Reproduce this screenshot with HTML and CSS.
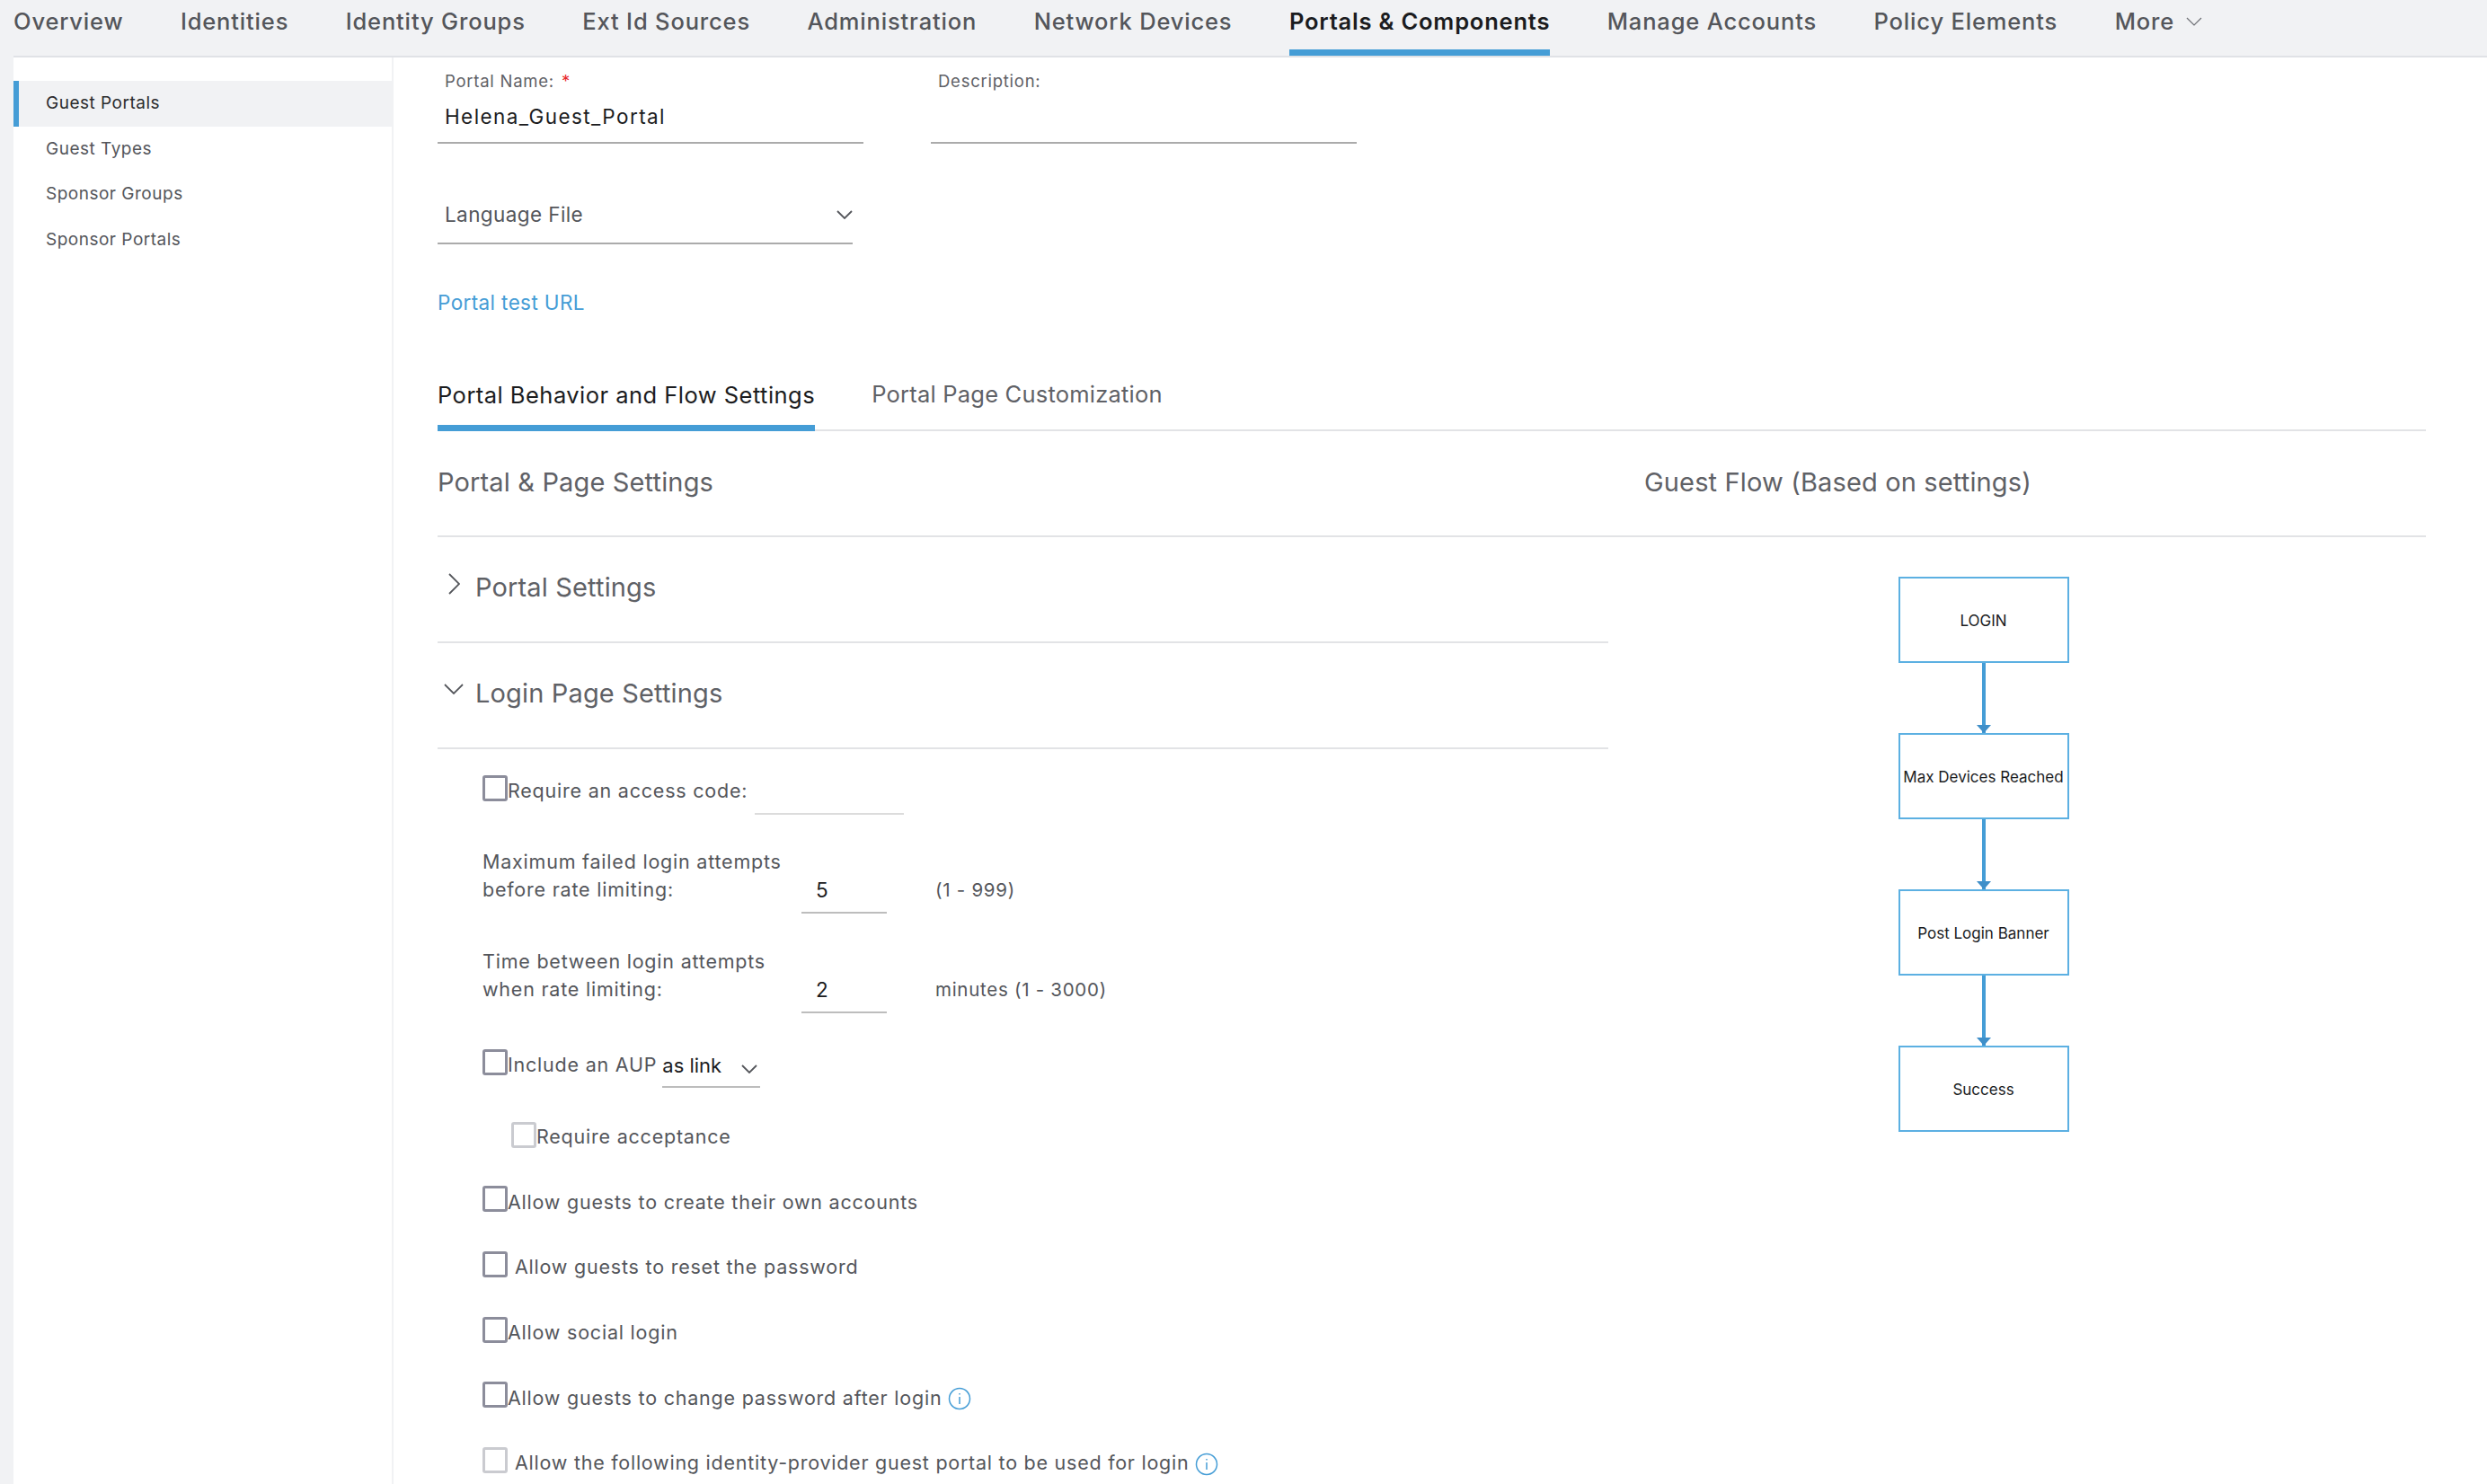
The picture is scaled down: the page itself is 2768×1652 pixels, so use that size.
FILE: index.html
```html
<!DOCTYPE html>
<html lang="en">
<head>
<meta charset="utf-8">
<title>Guest Portals</title>
<link rel="stylesheet" href="styles.css">
</head>
<body>
<div class="app">
  <nav class="topnav">
    <a class="nav-item">Overview</a>
    <a class="nav-item">Identities</a>
    <a class="nav-item">Identity Groups</a>
    <a class="nav-item">Ext Id Sources</a>
    <a class="nav-item">Administration</a>
    <a class="nav-item">Network Devices</a>
    <a class="nav-item active">Portals &amp; Components</a>
    <a class="nav-item">Manage Accounts</a>
    <a class="nav-item">Policy Elements</a>
    <a class="nav-item">More <svg class="nav-chev" viewBox="0 0 18 10"><path d="M1 1l8 8 8-8"/></svg></a>
  </nav>
  <div class="body-row">
    <aside class="sidebar">
      <a class="side-item active">Guest Portals</a>
      <a class="side-item">Guest Types</a>
      <a class="side-item">Sponsor Groups</a>
      <a class="side-item">Sponsor Portals</a>
    </aside>
    <main class="content">
      <div class="top-fields">
        <div class="field name-field">
          <label class="field-label">Portal Name: <span class="req">*</span></label>
          <div class="field-value">Helena_Guest_Portal</div>
        </div>
        <div class="field desc-field">
          <label class="field-label">Description:</label>
          <div class="field-value"></div>
        </div>
      </div>
      <div class="lang-select">
        <span>Language File</span>
        <svg class="chev" viewBox="0 0 18 10"><path d="M1 1l8 8 8-8"/></svg>
      </div>
      <a class="test-link">Portal test URL</a>
      <div class="tabs">
        <a class="tab active">Portal Behavior and Flow Settings</a>
        <a class="tab">Portal Page Customization</a>
      </div>
      <div class="head-row">
        <h2 class="col-title left-col">Portal &amp; Page Settings</h2>
        <h2 class="col-title">Guest Flow (Based on settings)</h2>
      </div>
      <div class="columns">
        <section class="left-col">
          <div class="acc-head">
            <svg class="acc-ic acc-right" viewBox="0 0 13 24"><path d="M1 1l11 11-11 11"/></svg>
            <span>Portal Settings</span>
          </div>
          <div class="acc-head">
            <svg class="acc-ic acc-down" viewBox="0 0 22 12"><path d="M1 1l10 10 10-10"/></svg>
            <span>Login Page Settings</span>
          </div>
          <div class="form">
            <div class="row row-access">
              <span class="cb"></span><span class="row-text">Require an access code:</span>
              <span class="blank-input"></span>
            </div>
            <div class="row row-num mt-36">
              <span class="num-label">Maximum failed login attempts<br>before rate limiting:</span>
              <span class="num-input">5</span>
              <span class="num-hint">(1 - 999)</span>
            </div>
            <div class="row row-num mt-35">
              <span class="num-label">Time between login attempts<br>when rate limiting:</span>
              <span class="num-input">2</span>
              <span class="num-hint">minutes (1 - 3000)</span>
            </div>
            <div class="row row-aup">
              <span class="cb"></span><span class="row-text">Include an AUP</span>
              <span class="aup-select">as link<svg class="chev small" viewBox="0 0 18 10"><path d="M1 1l8 8 8-8"/></svg></span>
            </div>
            <div class="row row-sub mt-32">
              <span class="cb disabled"></span><span class="row-text">Require acceptance</span>
            </div>
            <div class="row">
              <span class="cb"></span><span class="row-text">Allow guests to create their own accounts</span>
            </div>
            <div class="row">
              <span class="cb"></span><span class="row-text spaced">Allow guests to reset the password</span>
            </div>
            <div class="row">
              <span class="cb"></span><span class="row-text">Allow social login</span>
            </div>
            <div class="row">
              <span class="cb"></span><span class="row-text">Allow guests to change password after login</span>
              <svg class="info" viewBox="0 0 26 26"><circle cx="13" cy="13" r="11.5"/><path d="M13 11v8M13 7v1.6"/></svg>
            </div>
            <div class="row">
              <span class="cb disabled"></span><span class="row-text spaced narrow">Allow the following identity-provider guest portal to be used for login</span>
              <svg class="info" viewBox="0 0 26 26"><circle cx="13" cy="13" r="11.5"/><path d="M13 11v8M13 7v1.6"/></svg>
            </div>
          </div>
        </section>
        <section class="flow">
          <div class="flow-box">LOGIN</div>
          <div class="flow-arrow"></div>
          <div class="flow-box">Max Devices Reached</div>
          <div class="flow-arrow"></div>
          <div class="flow-box">Post Login Banner</div>
          <div class="flow-arrow"></div>
          <div class="flow-box">Success</div>
        </section>
      </div>
    </main>
  </div>
</div>
</body>
</html>
```

FILE: styles.css
```css
* { box-sizing: border-box; }
html, body { margin: 0; height: 100%; overflow: hidden; }
body { background: #fff; font-family: Inter, "Noto Sans", sans-serif; color: #54565b; }
.app { width: 2768px; height: 1652px; overflow: hidden; background: #f1f2f4; padding-left: 15px; display: flex; flex-direction: column; }

.topnav { height: 64px; flex: none; display: flex; gap: 63.5px; border-bottom: 2px solid #e0e2e6; }
.nav-item { height: 62px; padding-top: 8px; font-size: 25.5px; line-height: 32px; font-weight: 500; letter-spacing: 0.835px; color: #54565b; white-space: nowrap; }
.nav-item.active { color: #1b1c1e; font-weight: 600; letter-spacing: 0.8px; border-bottom: 7px solid #459dd6; }
.nav-chev { width: 18px; height: 10px; margin-left: 5px; vertical-align: 4px; fill: none; stroke: #6f7176; stroke-width: 1.2; }

.body-row { flex: 1; display: flex; background: #fff; min-height: 0; }
.sidebar { width: 423px; flex: none; padding-top: 26px; border-right: 2px solid #f1f2f4; }
.side-item { display: block; height: 50.6px; padding-left: 36px; font-size: 19px; line-height: 50px; letter-spacing: 0.5px; color: #54565b; }
.side-item.active { background: #f1f2f4; color: #2b2c2e; border-left: 6px solid #459dd6; padding-left: 30px; }

.content { flex: 1; min-width: 0; padding: 14px 68px 0 49px; }
.top-fields { display: flex; gap: 75px; }
.field { width: 474px; border-bottom: 2px solid #ababab; height: 82px; }
.field-label { display: block; height: 24px; padding-left: 8px; font-size: 18.5px; line-height: 24px; color: #5f6166; letter-spacing: 0.75px; }
.req { color: #e8262a; margin-left: 2px; }
.field-value { padding: 12px 0 0 8px; font-size: 22.5px; line-height: 32px; letter-spacing: 1.4px; color: #1b1c1e; }

.lang-select { width: 462px; height: 65px; margin-top: 47px; padding: 16px 0 0 8px; display: flex; justify-content: space-between; border-bottom: 2px solid #ababab; font-size: 22.5px; line-height: 32px; letter-spacing: 0.4px; color: #54565b; }
.chev { width: 18px; height: 10px; margin-top: 11px; fill: none; stroke: #54565b; stroke-width: 1.8; }
.test-link { display: block; margin-top: 49px; font-size: 22.5px; line-height: 32px; color: #459dd6; letter-spacing: 0.38px; }

.tabs { display: flex; gap: 63px; margin-top: 57px; height: 70px; border-bottom: 2px solid #e2e3e6; }
.tab { height: 70px; padding-top: 13px; font-size: 25.5px; line-height: 32px; letter-spacing: 0.22px; color: #5f6166; }
.tab.active { color: #1b1c1e; border-bottom: 7px solid #459dd6; letter-spacing: 0.47px; padding-top: 14px; }

.head-row { display: flex; height: 118px; padding-bottom: 3px; border-bottom: 2px solid #e2e3e6; align-items: center; }
.left-col { width: 1343px; flex: none; }
.col-title { margin: 0; font-size: 29px; line-height: 40px; font-weight: 400; letter-spacing: 0.15px; color: #5f6166; }

.columns { display: flex; }
section.left-col { width: 1303px; margin-right: 40px; }
.acc-head { position: relative; height: 118px; padding: 0 0 5px 42px; display: flex; align-items: center; border-bottom: 2px solid #e2e3e6; font-size: 29px; letter-spacing: 0.15px; color: #5f6166; }
.acc-ic { position: absolute; fill: none; stroke: #54565b; stroke-width: 1.8; }
.acc-right { left: 12px; top: 40px; width: 13px; height: 24px; }
.acc-down { left: 7px; top: 45px; width: 22px; height: 12px; }

.form { padding: 17px 0 0 50px; display: flex; flex-direction: column; gap: 28px; }
.row { height: 44.6px; display: flex; align-items: center; font-size: 21.5px; letter-spacing: 0.78px; color: #54565b; white-space: nowrap; }
.cb { width: 28px; height: 29px; flex: none; margin-top: -6px; border: 3px solid #8c8d9b; border-radius: 3px; }
.row-access .cb, .row-sub .cb, .row-aup .cb { margin-top: -4px; }
.cb.disabled { border-color: #cacbd0; }
.row-text.spaced { margin-left: 8px; }
.row-text.narrow { letter-spacing: 0.75px; }
.row-access { height: 56px; }
.row-access .row-text { padding-top: 1px; }
.blank-input { width: 166px; height: 56px; margin-left: 8px; border-bottom: 2px solid #dcdcdc; }
.row-num { height: 76px; align-items: flex-start; }
.mt-36 { margin-top: 8px; }
.mt-35 { margin-top: 7px; }
.mt-32 { margin-top: 4px; }
.num-label { width: 355px; padding-top: 1px; line-height: 31px; }
.num-input { width: 95px; height: 74px; padding: 32px 0 0 16px; line-height: 31px; font-size: 22.5px; color: #1b1c1e; border-bottom: 2px solid #bdbdbd; }
.num-hint { margin-left: 54px; padding-top: 32px; line-height: 31px; font-size: 20.5px; letter-spacing: 0.72px; }
.row-aup { height: 53px; }
.aup-select { position: relative; width: 109px; height: 53px; margin-left: 6px; padding-top: 12px; font-size: 22px; line-height: 32px; color: #1b1c1e; border-bottom: 2px solid #bdbdbd; letter-spacing: 0; }
.chev.small { position: absolute; right: 3px; top: 15px; width: 18px; height: 10px; margin-top: 12px; }
.row-sub { padding-left: 32px; }
.info { width: 26px; height: 26px; margin-left: 7px; margin-top: 3px; fill: none; stroke: #459dd6; stroke-width: 1.5; flex: none; }

.flow { width: 870px; padding-top: 44px; display: flex; flex-direction: column; align-items: center; padding-right: 115px; }
.flow-box { width: 190px; height: 96px; flex: none; display: flex; align-items: center; justify-content: center; padding-top: 2px; border: 2px solid #5cb0e2; font-size: 17px; color: #1b1c1e; white-space: nowrap; }
.flow-arrow { position: relative; width: 4px; height: 78px; flex: none; background: #459dd6; }
.flow-arrow::after { content: ""; position: absolute; left: -6px; bottom: 0; border-left: 8px solid transparent; border-right: 8px solid transparent; border-top: 9px solid #3f8fc9; }
```
